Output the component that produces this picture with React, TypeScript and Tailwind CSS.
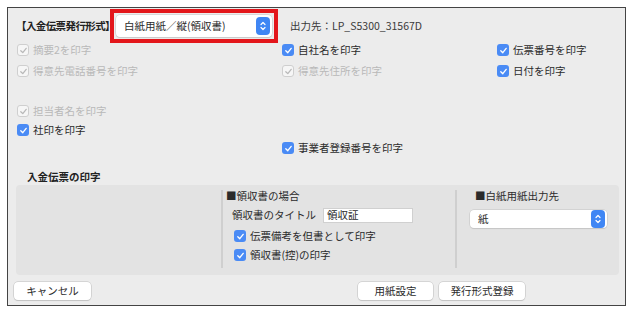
import React from 'react';

const FONT = '"Noto Sans CJK JP", "Noto Sans", sans-serif';

const CheckBox = ({ checked, disabled }: { checked?: boolean; disabled?: boolean }) => {
    if (disabled) {
        return (
            <span className="flex w-[12px] h-[12px] shrink-0 items-center justify-center rounded-[3px] border border-[#cfcfcf] bg-[#f6f6f6]">
                <svg width="9" height="9" viewBox="0 0 10 10">
                    <path d="M2 5.3 L4.2 7.4 L8 2.6" fill="none" stroke="#b8b8b8" strokeWidth="1.4" strokeLinecap="round" strokeLinejoin="round" />
                </svg>
            </span>
        );
    }
    return (
        <span className={`flex w-[12px] h-[12px] shrink-0 items-center justify-center rounded-[3px] ${checked ? 'bg-[#4a8bf5]' : 'bg-white border border-[#b5b5b5]'}`}>
            {checked && (
                <svg width="9" height="9" viewBox="0 0 10 10">
                    <path d="M2 5.3 L4.2 7.4 L8 2.6" fill="none" stroke="#ffffff" strokeWidth="1.5" strokeLinecap="round" strokeLinejoin="round" />
                </svg>
            )}
        </span>
    );
};

const Check = ({ label, checked, disabled }: { label: string; checked?: boolean; disabled?: boolean }) => (
    <div className="flex h-[12px] items-center gap-[4px]">
        <CheckBox checked={checked} disabled={disabled} />
        <span className={`whitespace-nowrap leading-[12px] ${disabled ? 'text-[#b9b9b9]' : 'text-[#2b2b2b]'}`}>{label}</span>
    </div>
);

const Stepper = () => (
    <span className="flex w-[14px] h-[18px] items-center justify-center rounded-[4px] bg-[#3f86f4]">
        <svg width="8" height="12" viewBox="0 0 8 12">
            <path d="M2 4.5 L4 2.5 L6 4.5" fill="none" stroke="#fff" strokeWidth="1.2" strokeLinecap="round" strokeLinejoin="round" />
            <path d="M2 7.5 L4 9.5 L6 7.5" fill="none" stroke="#fff" strokeWidth="1.2" strokeLinecap="round" strokeLinejoin="round" />
        </svg>
    </span>
);

const Select = ({ value, className }: { value: string; className: string }) => (
    <div className={`flex items-center justify-between rounded-[4px] bg-white pl-[8px] pr-[2px] shadow-[0_0_0_0.5px_#c4c4c4,0_1px_1px_rgba(0,0,0,0.12)] ${className}`}>
        <span className="whitespace-nowrap text-[#2b2b2b]">{value}</span>
        <Stepper />
    </div>
);

const Button = ({ label, className }: { label: string; className: string }) => (
    <button className={`flex h-[18px] items-center justify-center rounded-[4px] bg-white text-[#2b2b2b] shadow-[0_0_0_0.5px_#bdbdbd,0_1px_1px_rgba(0,0,0,0.15)] ${className}`}>
        {label}
    </button>
);

const App = () => {
    return (
        <div className="w-[635px] h-[314px] bg-white pl-[7px] pt-[7px] text-[10.5px]" style={{ fontFamily: FONT }}>
            <div className="w-[619px] h-[299px] border border-[#444] bg-[#ececec]">
                {/* header */}
                <div className="flex h-[36px] items-center pl-[8px]">
                    <span className="w-[94px] shrink-0 whitespace-nowrap font-bold tracking-[-0.6px] text-[#222]">【入金伝票発行形式】</span>
                    <div className="h-[34px] w-[168px] shrink-0 border-4 border-[#e3161b] p-[2px]">
                        <Select value="白紙用紙／縦(領収書)" className="h-[22px] w-full" />
                    </div>
                    <span className="ml-[12px] whitespace-nowrap text-[#3a3a3a]">出力先：LP_S5300_31567D</span>
                </div>

                {/* options */}
                <div className="grid grid-cols-[265px_215px_1fr] pl-[9px]">
                    <Check label="摘要2を印字" disabled />
                    <Check label="自社名を印字" checked />
                    <Check label="伝票番号を印字" checked />
                </div>
                <div className="mt-[9px] grid grid-cols-[265px_215px_1fr] pl-[9px]">
                    <Check label="得意先電話番号を印字" disabled />
                    <Check label="得意先住所を印字" disabled />
                    <Check label="日付を印字" checked />
                </div>
                <div className="mt-[28px] pl-[9px]">
                    <Check label="担当者名を印字" disabled />
                </div>
                <div className="mt-[7px] pl-[9px]">
                    <Check label="社印を印字" checked />
                </div>
                <div className="mt-[6px] pl-[274px]">
                    <Check label="事業者登録番号を印字" checked />
                </div>

                <div className="mt-[17px] h-[12px] pl-[19px] font-bold leading-[12px] text-[#222]">入金伝票の印字</div>

                {/* receipt box */}
                <div className="ml-[8px] mt-[2px] flex h-[90px] w-[603px] rounded-[4px] bg-[#e3e3e3] pt-[5px] pb-[7px]">
                    <div className="w-[205px]" />
                    <div className="w-[234px] border-l-2 border-[#cfcfcf] pl-[3px]">
                        <div className="h-[12px] leading-[12px] text-[#2b2b2b]">■領収書の場合</div>
                        <div className="mt-[7px] flex h-[12px] items-center pl-[6px]">
                            <span className="w-[91px] whitespace-nowrap leading-[12px] text-[#2b2b2b]">領収書のタイトル</span>
                            <div className="flex h-[15px] w-[90px] items-center border border-[#d0d0d0] bg-white pl-[3px] text-[#2b2b2b]">領収証</div>
                        </div>
                        <div className="mt-[9px] pl-[8px]">
                            <Check label="伝票備考を但書として印字" checked />
                        </div>
                        <div className="mt-[7px] pl-[8px]">
                            <Check label="領収書(控)の印字" checked />
                        </div>
                    </div>
                    <div className="border-l-2 border-[#cfcfcf] pl-[13px]">
                        <div className="h-[12px] pl-[5px] leading-[12px] text-[#2b2b2b]">■白紙用紙出力先</div>
                        <Select value="紙" className="mt-[8px] h-[18px] w-[137px]" />
                    </div>
                </div>

                {/* buttons */}
                <div className="mt-[7px] flex pl-[6px]">
                    <Button label="キャンセル" className="w-[77px]" />
                    <Button label="用紙設定" className="ml-[267px] w-[75px]" />
                    <Button label="発行形式登録" className="ml-[6px] w-[86px]" />
                </div>
            </div>
        </div>
    );
};

export default App;
